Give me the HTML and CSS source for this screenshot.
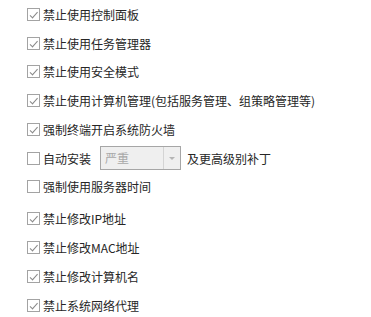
FILE: index.html
```html
<!DOCTYPE html>
<html lang="zh-CN">
<head>
    <meta charset="UTF-8">
    <title>终端策略</title>
    <link rel="stylesheet" href="styles.css">
</head>
<body>
    <div class="policy">
        <div class="group">
            <label class="row"><span class="box on"></span>禁止使用控制面板</label>
            <label class="row"><span class="box on"></span>禁止使用任务管理器</label>
            <label class="row"><span class="box on"></span>禁止使用安全模式</label>
            <label class="row"><span class="box on"></span>禁止使用计算机管理(包括服务管理、组策略管理等)</label>
            <label class="row"><span class="box on"></span>强制终端开启系统防火墙</label>
            <div class="row">
                <span class="box"></span>自动安装
                <div class="select">
                    <span class="val">严重</span>
                    <span class="arrow"></span>
                </div>
                及更高级别补丁
            </div>
            <label class="row"><span class="box"></span>强制使用服务器时间</label>
        </div>
        <div class="group second">
            <label class="row"><span class="box on"></span>禁止修改IP地址</label>
            <label class="row"><span class="box on"></span>禁止修改MAC地址</label>
            <label class="row"><span class="box on"></span>禁止修改计算机名</label>
            <label class="row"><span class="box on"></span>禁止系统网络代理</label>
        </div>
    </div>
</body>
</html>
```

FILE: styles.css
```css
body{
    margin: 0;
    padding: 0;
    background: #fff;
    font-family: "Noto Sans CJK SC", "Noto Sans", sans-serif;
    font-size: 12px;
    color: #262626;
}
.policy{
    padding-left: 27px;
}
.second{
    margin-top: 3.25px;
}
.row{
    display: flex;
    align-items: center;
    height: 28.75px;
    white-space: nowrap;
}
.box{
    position: relative;
    box-sizing: border-box;
    width: 13px;
    height: 13px;
    margin-right: 3px;
    border: 1px solid #a3a3a3;
    background: #fff;
    flex: none;
}
/* 勾 */
.box.on::after{
    content: "";
    position: absolute;
    left: 3.5px;
    top: 1px;
    width: 2.5px;
    height: 6.5px;
    border-right: 1px solid #888;
    border-bottom: 1px solid #888;
    transform: rotate(42deg);
}
.select{
    display: flex;
    box-sizing: border-box;
    width: 81px;
    height: 24px;
    margin: 0 6px 0 9px;
    border: 1px solid #a6a6a6;
    background: #efefef;
}
.select .val{
    flex: 1;
    padding-left: 4px;
    line-height: 22px;
    color: #a8a8a8;
}
.select .arrow{
    position: relative;
    width: 16px;
    border-left: 1px solid #d4d4d4;
}
.select .arrow::after{
    content: "";
    position: absolute;
    left: 5px;
    top: 10px;
    border-left: 3px solid transparent;
    border-right: 3px solid transparent;
    border-top: 3px solid #b5b5b5;
}
```
